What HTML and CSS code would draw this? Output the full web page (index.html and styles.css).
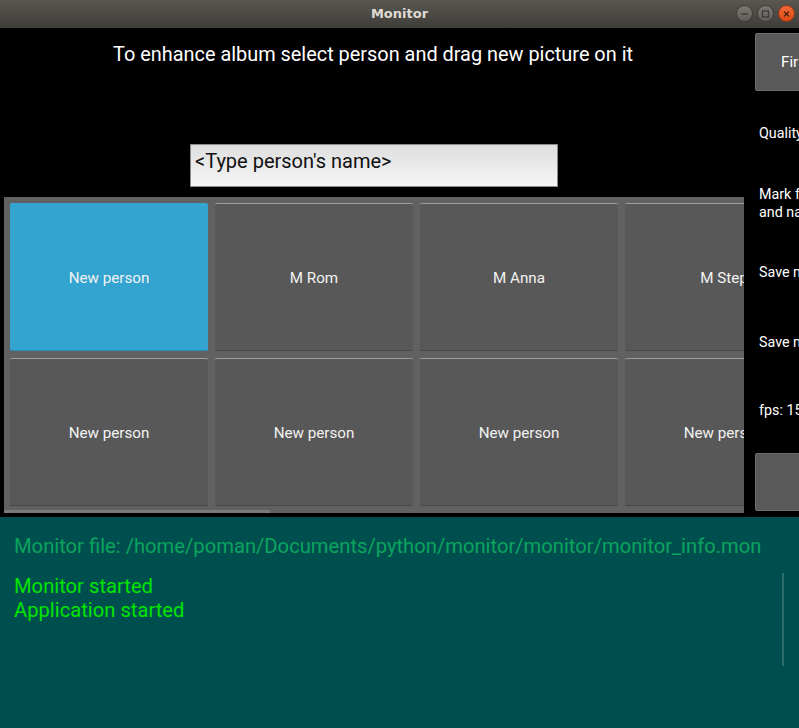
FILE: index.html
```html
<!DOCTYPE html>
<html>
<head>
<meta charset="utf-8">
<title>Monitor</title>
<link rel="stylesheet" href="styles.css">
</head>
<body>
<div class="window">
  <header class="titlebar">
    <span class="title">Monitor</span>
    <div class="controls">
      <span class="wbtn wmin"><svg width="16" height="16" viewBox="0 0 16 16"><line x1="4.5" y1="8" x2="11.5" y2="8" stroke="#3a3935" stroke-width="1.4"/></svg></span>
      <span class="wbtn wmax"><svg width="16" height="16" viewBox="0 0 16 16"><rect x="4.8" y="4.8" width="6.4" height="6.4" fill="none" stroke="#3a3935" stroke-width="1.3"/></svg></span>
      <span class="wbtn wclose"><svg width="16" height="16" viewBox="0 0 16 16"><path d="M5.5 5.5 L10.5 10.5 M10.5 5.5 L5.5 10.5" stroke="#3a1a10" stroke-width="1.4"/></svg></span>
    </div>
  </header>
  <main class="main">
    <section class="left">
      <div class="hint">To enhance album select person and drag new picture on it</div>
      <div class="namebox">&lt;Type person's name&gt;</div>
      <div class="gridwrap">
        <div class="grid">
          <div class="tile selected">New person</div>
          <div class="tile">M Rom</div>
          <div class="tile">M Anna</div>
          <div class="tile">M Step</div>
          <div class="tile">New person</div>
          <div class="tile">New person</div>
          <div class="tile">New person</div>
          <div class="tile">New person</div>
        </div>
        <div class="hscroll"></div>
      </div>
    </section>
    <aside class="side">
      <div class="sbtn">First</div>
      <div class="slabel l-quality">Quality</div>
      <div class="slabel l-mark">Mark faces<br>and names</div>
      <div class="slabel l-save1">Save marked</div>
      <div class="slabel l-save2">Save marked</div>
      <div class="slabel l-fps">fps: 15</div>
      <div class="sbtn sbtn2"></div>
    </aside>
  </main>
  <footer class="console">
    <div class="file">Monitor file: /home/poman/Documents/python/monitor/monitor/monitor_info.mon</div>
    <div class="log">
      <div class="lines">
        <div>Monitor started</div>
        <div>Application started</div>
      </div>
      <div class="vscroll"></div>
    </div>
  </footer>
</div>
</body>
</html>
```
FILE: styles.css
```css
* { box-sizing: border-box; }
html, body { margin: 0; padding: 0; background: #000; }
.window { width: 799px; height: 728px; overflow: hidden; font-family: Roboto, "Liberation Sans", sans-serif; }

.titlebar {
  height: 28px;
  background: linear-gradient(#5a5751, #3e3d39);
  position: relative;
  display: flex;
  align-items: center;
  justify-content: center;
}
.title {
  font-family: "DejaVu Sans", sans-serif;
  font-weight: bold;
  font-size: 13px;
  color: #dfdbd2;
  margin-top: -2px;
}
.controls {
  position: absolute;
  right: 4px;
  top: 5px;
  display: flex;
  gap: 4px;
}
.wbtn {
  width: 17px; height: 17px;
  border-radius: 50%;
  display: flex; align-items: center; justify-content: center;
  background: linear-gradient(#7a7873, #5f5e59);
  border: 1px solid #3b3a36;
}
.wclose { background: linear-gradient(#f26a38, #de4a14); border-color: #8e3514; }

.main { height: 489px; display: flex; background: #000; }
.left { width: 744px; flex: none; display: flex; flex-direction: column; }
.hint {
  margin-top: 15px;
  height: 24px;
  line-height: 24px;
  text-align: center;
  color: #fff;
  font-size: 19.9px;
  padding-left: 2px;
}
.namebox {
  margin: 77px 0 0 190px;
  width: 368px;
  height: 43px;
  border: 1px solid #8c8c8c;
  background: linear-gradient(#dedede, #f6f6f6);
  color: #111;
  font-size: 20px;
  line-height: 32px;
  padding-left: 4px;
}
.gridwrap {
  margin: 10px 0 0 4px;
  height: 316px;
  background: #616161;
  overflow: hidden;
  position: relative;
}
.grid {
  display: grid;
  grid-template-columns: repeat(4, 198px);
  grid-template-rows: repeat(2, 148px);
  column-gap: 7px;
  row-gap: 7px;
  padding: 6px;
  width: 850px;
}
.tile {
  background: #585858;
  border-top: 1px solid #9d9d9d;
  border-bottom: 1px solid #474747;
  border-radius: 2px;
  color: #f2f2f2;
  font-size: 15.2px;
  display: flex; align-items: center; justify-content: center;
  white-space: nowrap;
  padding-top: 2px;
}
.tile.selected { background: #33a3cf; border-top-color: #33a3cf; border-bottom-color: #2a8fb6; }
.hscroll {
  position: absolute;
  left: 0; bottom: 0;
  width: 266px; height: 3px;
  background: #7a7a7a;
}

.side { flex: 1; overflow: hidden; display: flex; flex-direction: column; color: #fff; font-size: 14.3px; white-space: nowrap; }
.sbtn {
  margin: 5px 0 0 11px;
  width: 120px; height: 58px;
  background: #595959;
  border: 1px solid #6e6e6e;
  border-radius: 2px;
  font-size: 15.2px;
  display: flex; align-items: center;
  padding-left: 25px;
}
.slabel { padding-left: 15px; line-height: 18px; }
.l-quality { margin-top: 33px; }
.l-mark { margin-top: 43px; }
.l-save1 { margin-top: 42px; }
.l-save2 { margin-top: 52px; }
.l-fps { margin-top: 50px; }
.sbtn2 { margin-top: 34px; }

.console {
  height: 211px;
  background: #004f4f;
  padding: 17px 0 0 14px;
  font-size: 20.2px;
  position: relative;
}
.file { color: #0ba45e; line-height: 24px; white-space: nowrap; }
.log { margin-top: 16px; color: #00e400; line-height: 24px; }
.vscroll {
  position: absolute;
  left: 782px; top: 56px;
  width: 2px; height: 93px;
  background: #2b6e6c;
}
```
